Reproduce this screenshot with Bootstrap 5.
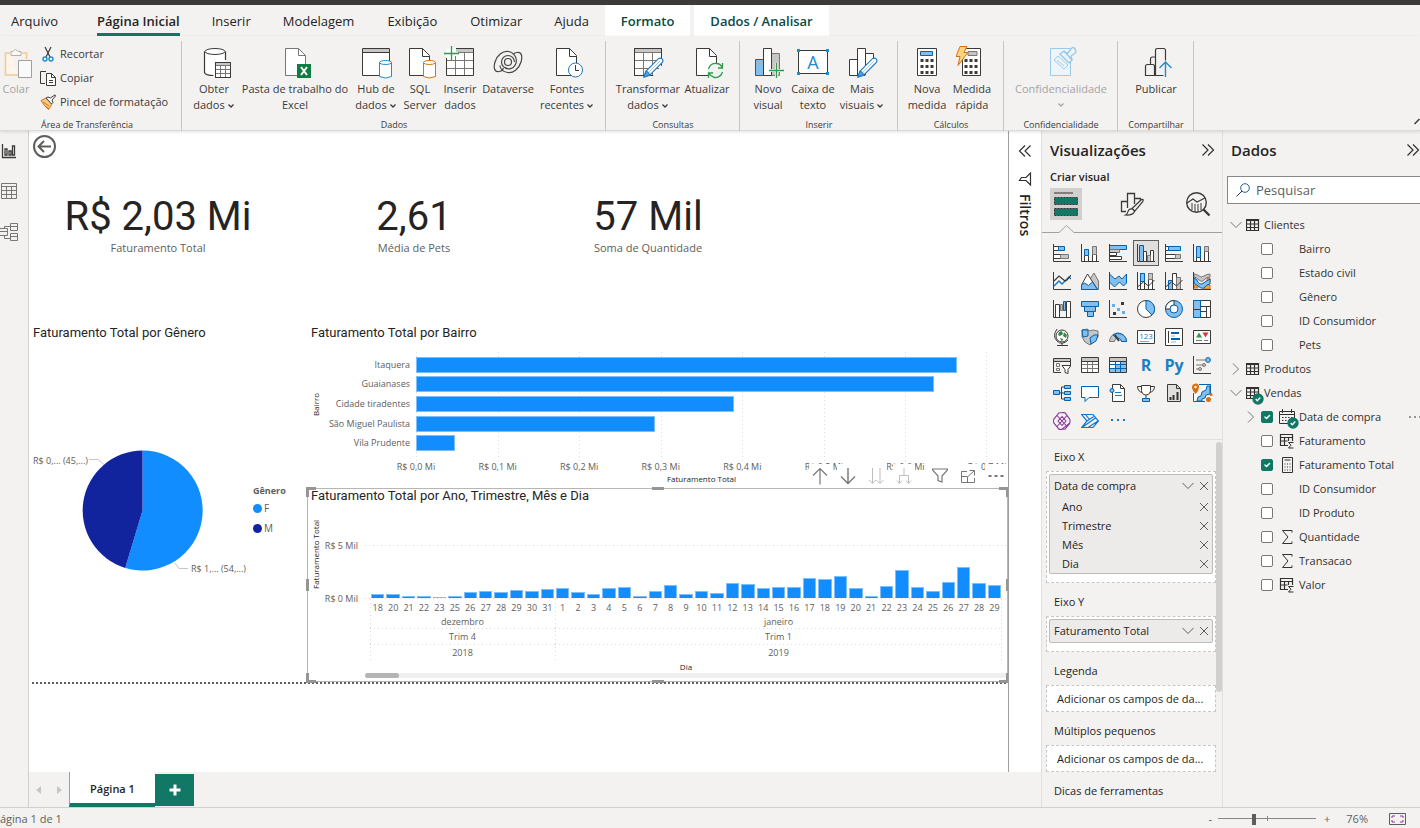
<!DOCTYPE html>
<html lang="pt-BR">
<head>
<meta charset="utf-8">
<meta name="viewport" content="width=device-width, initial-scale=1">
<title>Relatório de vendas</title>
<link href="https://cdn.jsdelivr.net/npm/bootstrap@5.3.0/dist/css/bootstrap.min.css" rel="stylesheet">
<style>
:root{--ui:"Open Sans","Noto Sans",sans-serif;--din:Roboto,"Open Sans",sans-serif;--green:#117865;--bg:#f3f2f1;--line:#e1dfdd;--ink:#252423;--azure:#118dff;--dot:#dddbd9}
body{font-family:var(--ui);font-size:11px;line-height:16px;color:#323130;background:var(--bg);height:100vh;overflow:hidden}
button,input{font-family:inherit}
.plain{background:none;border:0;padding:0;color:inherit;font-size:inherit;line-height:inherit}
svg{display:block;flex:none}
.topstrip{height:5px;background:#3b3a39}
/* tabs */
.menubar{height:31px;font-size:13px}
.menubar .nav-link{color:var(--ink);padding:0 16px;line-height:33px;height:31px;white-space:nowrap}
.menubar .tab-file{padding:0 23px 0 11px}
.menubar .nav-link.active{font-weight:600}
.menubar .nav-link.active span{display:block;height:31px;border-bottom:3px solid var(--green)}
.menubar .wide{padding:0 17px}
.menubar .ctx{background:#fff;color:#0b4a40;font-weight:600;padding:0 16px;margin-right:4px}
/* ribbon */
.ribbon{height:95px;padding-top:5px;color:#3b3a39;position:relative;border-bottom:1px solid #dddbd9;box-shadow:0 1px 3px rgba(0,0,0,.12);z-index:2}
.rgroup{height:90px;border-right:1px solid #c8c6c4;padding:5px 7px 0 8px}
.rgroup.first{padding-left:0;width:182px}
.cap{font-size:9px;line-height:12px;text-align:center}
.rbtn{white-space:nowrap;display:flex;flex-direction:column;align-items:center;justify-content:flex-start;flex:none}
.rbtn svg{margin-bottom:3px}
.rbtn span svg{margin:0 0 0 2px}
.w32{width:32px}.w40{width:40px}.w42{width:42px}.w48{width:48px}.w50{width:50px}.w56{width:56px}.w60{width:60px}.w62{width:62px}.w68{width:68px}.w98{width:98px}.w114{width:114px}
.off{color:#a6a4a2}
.clip-list{padding-left:8px;margin-top:-4px}
.srow{height:24px;gap:4px;display:flex;align-items:center;white-space:nowrap}
.collapse-rib{position:absolute;right:0;bottom:3px}
/* icon paint */
.k,.kw{fill:none;stroke:#3b3a39}.kw{fill:#fff}
.b{fill:#83beec;stroke:#0063b1}.bl{fill:none;stroke:#1e8bcd}.bw{fill:#fff;stroke:#0063b1}
.g{fill:#c8c6c4;stroke:#797775}.gl{fill:none;stroke:#797775}
.grn{fill:none;stroke:#2e9a4a}
/* main */
.mainrow{min-height:0}
.rail{width:29px;border-right:1px solid #d2d0ce}
.canvas-area{border-right:1px solid #a19f9d}
.report{color:#605e5c;font-size:9px;line-height:12px}
.backrow{height:32px;padding:4px}
.kpis{height:160px;padding-top:31px}
.kpi strong{display:block;font:400 40px/46px var(--din);color:var(--ink);white-space:nowrap}
.kpi span{font-size:11px;line-height:16px}
.k1{width:258px}.k2{width:254px}.k3{width:214px}
.vtitle{font:400 13px/20px var(--din);color:var(--ink);margin:0;white-space:nowrap;padding-left:4px}
.leftcol{width:278px;flex:none}
.pie{padding-top:102px}
.leg{font-size:10px;line-height:20px;padding-top:39px}
.leg b{display:block;font-size:9px;line-height:14px}
.leg li{display:flex;align-items:center;gap:2px}
.leg i{width:9px;height:9px;border-radius:50%}
.f{background:var(--azure)}.m{background:#12239e}
.vtext{writing-mode:vertical-rl;transform:rotate(180deg);font-size:8px;line-height:10px;text-align:center;color:var(--ink);white-space:nowrap}
.vtext.t1{height:122px}.vtext.t2{height:102px;margin-left:3px}
.hb{height:144px;padding-right:21px;margin-top:1px}
.hlabels{width:92px;text-align:right;height:108px;padding:3px 3px 7px 0;margin-top:8px}
.hlabels div{flex:1;display:flex;align-items:center;justify-content:flex-end;white-space:nowrap}
.hbody{padding-left:3px;min-width:0}
.hplot{height:109px;padding:3px 0 8px;margin-top:8px;position:relative}
.hgrid{position:absolute;inset:0;display:flex}
.hgrid i{flex:1;background:repeating-linear-gradient(var(--dot) 0 1px,transparent 1px 4px) 0 0/1px 100% no-repeat}
.hgrid i:last-child{background:repeating-linear-gradient(var(--dot) 0 1px,transparent 1px 4px) 0 0/1px 100% no-repeat,repeating-linear-gradient(var(--dot) 0 1px,transparent 1px 4px) 100% 0/1px 100% no-repeat}
.hrow{flex:1;display:flex;align-items:center;position:relative}
.hrow i{height:16px;background:var(--azure);border:1px solid #7cbfff}
/* eight labels centred on the eight grid lines */
.hticks{margin-left:calc(-100%/14);margin-right:calc(-100%/14);display:flex}
.hticks span{flex:1 1 0;display:flex;justify-content:center;white-space:nowrap}
.axt{font-size:8px;text-align:center;color:var(--ink)}
.selbox{border:1px solid #b8b6b4;background:#fff;height:194px;position:relative;display:flex;flex-direction:column}
.selbox .vtitle{line-height:14px;padding-left:3px}
.hd{position:absolute;border:0 solid #979593;width:10px;height:10px}
.hd.tl{top:-2px;left:-2px;border-width:3px 0 0 3px}.hd.tr{top:-2px;right:-2px;border-width:3px 3px 0 0}
.hd.bl2{bottom:-2px;left:-2px;border-width:0 0 3px 3px}.hd.br{bottom:-2px;right:-2px;border-width:0 3px 3px 0}
.hd.tc,.hd.bc{left:calc(50% - 6px);width:12px;height:3px;background:#979593}.hd.tc{top:-2px}.hd.bc{bottom:-2px}
.hd.ml,.hd.mr{top:calc(50% - 6px);width:3px;height:12px;background:#979593}.hd.ml{left:-2px}.hd.mr{right:-2px}
.vtools{position:absolute;right:0;top:-25px;display:flex;gap:6px}
.vtools button{width:22px;height:23px;background:#fff;display:flex;align-items:center;justify-content:center}
.vtools .gap{margin-left:8px}
.yt{width:33px;height:96px;padding-top:37px;white-space:nowrap;margin-left:4px}
.yt span{display:flex;justify-content:flex-end;height:53px}
.cbody{margin-left:7px}
.cplot{height:96px;position:relative;display:flex;align-items:flex-end;padding:0 5px 1px;background:repeating-linear-gradient(90deg,var(--dot) 0 1px,transparent 1px 4px) 0 42px/100% 1px no-repeat,repeating-linear-gradient(90deg,var(--dot) 0 1px,transparent 1px 4px) 0 100%/100% 1px no-repeat}
.cplot i{flex:1;margin:0 1px;background:var(--azure);border:1px solid #7cbfff;border-bottom:0}
.periods{margin:0 5px;height:62px;background:repeating-linear-gradient(var(--dot) 0 1px,transparent 1px 4px) 100% 0/1px 100% no-repeat}
.periods>div{text-align:center;background:repeating-linear-gradient(var(--dot) 0 1px,transparent 1px 4px) 0 0/1px 100% no-repeat}
.p12{flex:12 1 0}.p29{flex:29 1 0}
.days{display:flex;line-height:17px;height:17px}
.days span{flex:1 1 0;width:0;display:flex;justify-content:center}
.per{line-height:16px;height:16px;background:repeating-linear-gradient(90deg,var(--dot) 0 1px,transparent 1px 4px) 0 100%/100% 1px no-repeat}
.per.mo{line-height:11px;height:13px}
.per.yr{background:none}
.hscroll{height:5px;border-radius:3px;background:#f0f0f0}
.hscroll i{display:block;width:34px;height:5px;border-radius:3px;background:#b5b5b5}
.pgend{height:2px;margin:0 0 0 3px;background:repeating-linear-gradient(90deg,#605e5c 0 2px,transparent 2px 4px)}
.filt{width:32px;gap:14px;padding-top:13px;color:var(--ink)}
.filt span{writing-mode:vertical-rl;font-size:14px;font-weight:600;line-height:18px;margin-top:-6px}
.pages{height:35px}
.pgnav{width:40px;gap:16px;padding-left:6px}
.pages .pg{width:86px;background:#fff;border-left:1px solid #a19f9d;border-bottom:4px solid var(--green);padding-top:3px;font-size:11px;font-weight:600;color:var(--ink)}
.pages .add{width:39px;margin:2px 0 1px;background:var(--green)}
/* panes */
.pane{border-left:1px solid var(--line)}
.pane h2{font-size:15px;line-height:20px;font-weight:600;color:var(--ink);margin:0}
.phead{padding:9px 7px 0 8px}
.data .phead{padding-right:0}
.vis{width:181px}
.vis h3{font-size:11px;font-weight:600;line-height:16px;margin:9px 0 0;color:var(--ink)}
.modes{padding:3px 8px 0}
.mode{width:32px;height:32px;display:flex;align-items:center;justify-content:center}
.mode.on{background:#d2d0ce}
.gallery{display:grid;grid-template-columns:repeat(6,28px);grid-auto-rows:28px;padding:6px 0 4px 6px}
.gallery button{display:flex;align-items:center;justify-content:center}
.gallery .on{margin:2px;background:#e1dfdd;outline:1px solid #605e5c}
.gallery svg{width:18px;height:18px}
.gallery .ltr{font-weight:700;color:#1a7fc3;font-size:16px}
.fields{position:relative;border-top:1px solid var(--line);padding:9px 6px 0 4px;overflow:hidden;color:var(--ink)}
.fields h4{font-size:11px;line-height:16px;font-weight:400;margin:0 0 6px 8px}
.fields:after{content:"";position:absolute;right:0;top:2px;width:6px;height:250px;border-radius:3px;background:#d2d0ce}
.well{border:1px dashed #c8c6c4;background:#fff;padding:2px;margin-bottom:11px}
.chip{background:#edebe9;border:1px solid #bebbb8;border-radius:2px;padding-left:4px}
.chip>div{display:flex;align-items:center;height:19px;gap:5px;padding-right:3px}
.chip>div:first-child{height:22px}
.chip>div+div{padding-left:8px}
.chip svg{color:#605e5c}
.well.tall{padding-bottom:8px}
.empty{height:27px;line-height:26px;padding:0 0 0 10px;white-space:nowrap}
.data{width:198px}
.search{height:28px;border:1px solid #8a8886;border-right:0;background:#fff;margin:16px 0 0 4px;padding-left:8px;gap:6px}
.search input{border:0;outline:0;width:100%;font-size:13px;padding:0;color:#605e5c}
.search input::placeholder{color:#605e5c;opacity:1}
.tree{padding-top:9px}
.tree li{display:flex;align-items:center;height:24px;white-space:nowrap;position:relative}
.tree .tb{padding-left:7px;gap:4px}
.tree label{flex:1;cursor:pointer}
.dim{color:#797775}
.fld .exp{width:12px;margin-left:22px;margin-right:4px}
.fld .form-check-input{width:12px;height:12px;margin:0 6px 0 0;border:1px solid #797775;border-radius:2px;flex:none}
.fld .form-check-input:checked{background-color:var(--green);border-color:var(--green)}
.fld .ic{width:16px;margin-right:4px;flex:none}
.okb{position:absolute;bottom:0}
.tb .okb{left:29px}.fld .okb{left:64px}
.status{height:21px;border-top:1px solid #d2d0ce;padding-top:2px;font-size:11px;color:#605e5c}
.zoombar{padding-right:14px}
.zoombar .pct{margin:0 21px 0 16px}
.zoomr{appearance:none;-webkit-appearance:none;width:98px;height:12px;background:linear-gradient(#8a8886,#8a8886) 0 5px/100% 1px no-repeat,linear-gradient(#8a8886,#8a8886) 50% 3px/1px 5px no-repeat;margin:0 8px 0 6px}
.zoomr::-webkit-slider-thumb{-webkit-appearance:none;width:4px;height:11px;background:#605e5c}
</style>
</head>
<body class="d-flex flex-column">
<svg width="0" height="0" class="position-absolute" aria-hidden="true">
<symbol id="chev" viewBox="0 0 8 8"><path d="M1.500 2.500 4 5l2.500-2.500" fill="none" stroke="currentColor" stroke-width="1.300"/></symbol>
<symbol id="x" viewBox="0 0 10 10"><path d="m1 1 8 8M9 1 1 9" fill="none" stroke="currentColor"/></symbol>
<symbol id="down" viewBox="0 0 12 12"><path d="m.5 3 5.500 5.500L11.500 3" fill="none" stroke="currentColor"/></symbol>
<symbol id="right" viewBox="0 0 12 12"><path d="M3 .5 8.500 6 3 11.500" fill="none" stroke="currentColor"/></symbol>
<symbol id="dbl" viewBox="0 0 14 14"><path d="m1.500 1.500 5.500 5.500-5.500 5.500M7 1.500 12.500 7 7 12.500" fill="none" stroke="#323130" stroke-width="1.200"/></symbol>
<symbol id="tbl" viewBox="0 0 14 14"><path d="M.5 1.500h12v11H.5zM.5 2.500h12M.5 6h12M.5 9.500h12M4.500 2v11M8.500 2v11" fill="none" stroke="#323130" stroke-width="1.200"/></symbol>
<symbol id="tsum" viewBox="0 0 16 16"><path d="M9 12.500H1.500v-11h12V8M1.500 4.500h12M1.500 8h7M5.500 4.500v8M9.500 4.500V8" fill="none" stroke="#323130" stroke-width="1.200"/><path d="M14.500 9.500h-5l2.500 2.700-2.500 2.800h5" fill="none" stroke="#323130"/></symbol>
<symbol id="sum" viewBox="0 0 16 16"><path d="M13 3.500v-2H3.500L9 8l-5.500 6.500H13v-2" fill="none" stroke="#323130"/></symbol>
<symbol id="calc" viewBox="0 0 16 16"><path d="M3.500.5h10v15h-10zM5.500 3h6" fill="none" stroke="#323130"/><path d="M6 6.500v8M8.500 6.500v8M11 6.500v8" fill="none" stroke="#323130" stroke-dasharray="1 2"/></symbol>
<symbol id="ok" viewBox="0 0 12 12"><circle cx="6" cy="6" r="5.700" fill="#117865"/><path d="m3.700 6 1.600 1.700 3-3.200" fill="none" stroke="#fff" stroke-width="1.300"/></symbol>
<symbol id="pen" viewBox="0 0 22 22"><path d="m1 21 2-6L16.500 1.500q2-1 3.500.5t.5 3.500L7 19z" fill="#fff" stroke="#1e78bd" stroke-width="1.200"/><path d="m1 21 2-6q3.500 0 4 4z" fill="#4ea0dc" stroke="#1e78bd"/><path d="M6.500 15.500 18 4" stroke="#9cc9ec"/></symbol>
</svg>

<div class="topstrip"></div>
<nav class="menubar nav flex-nowrap">
<a class="nav-link tab-file" href="#">Arquivo</a><a class="nav-link active" href="#"><span>Página Inicial</span></a><a class="nav-link" href="#">Inserir</a><a class="nav-link" href="#">Modelagem</a><a class="nav-link wide" href="#">Exibição</a><a class="nav-link" href="#">Otimizar</a><a class="nav-link" href="#">Ajuda</a><a class="nav-link ctx" href="#">Formato</a><a class="nav-link ctx" href="#">Dados / Analisar</a>
</nav>

<div class="ribbon d-flex">
<section class="rgroup first d-flex flex-column">
<div class="d-flex flex-fill">
<button class="plain rbtn w32 off" type="button"><svg width="32" height="32"><path d="M10 7H5.500v22H18M21.500 7h5v6" fill="#fff5ea" stroke="#f3c795" stroke-width="1.500"/><path d="M11 9.500V5.500h2q2.500-4 5 0h3v4z" fill="#fafafa" stroke="#b3b0ad"/><path d="M18.500 14.500h13v17h-13z" fill="#fafafa" stroke="#a19f9d"/></svg>Colar</button>
<div class="clip-list">
<button class="plain srow" type="button"><svg width="16" height="16"><path d="m5 1 5 10M11 1 6 11" class="k" stroke-width="1.200"/><circle cx="5" cy="13" r="2" class="bl" stroke-width="1.400"/><circle cx="11" cy="13" r="2" class="bl" stroke-width="1.400"/></svg>Recortar</button>
<button class="plain srow" type="button"><svg width="16" height="16"><path d="M5 13.500H.5V1.500H6" class="k"/><path d="M6.500 3.500h5l4 4v8h-9z" class="kw"/><path d="M11.500 3.500v4h4M9 10.500h4M9 12.500h4" class="k"/></svg>Copiar</button>
<button class="plain srow" type="button"><svg width="16" height="16"><path d="M1 6.500 6 4l6 6-3.500 5.500Q4 12 1 6.500z" fill="#f9c987" stroke="#d8700f"/><path d="m3 8 6 4M5 12l4 3" stroke="#d8700f"/><path d="m6 4 2-1 2.500 1L15 .8l.5 1.200L12 6l1 2.500-1.500 1.500z" class="kw"/></svg>Pincel de formatação</button>
</div></div>
<div class="cap">Área de Transferência</div></section>

<section class="rgroup d-flex flex-column"><div class="d-flex flex-fill">
<button class="plain rbtn w48" type="button"><svg width="32" height="32" overflow="visible"><path d="M6.500 5.500v22q2 3 10 3V16h11V5.500" fill="#fff"/><ellipse cx="17" cy="5.500" rx="10" ry="3" class="kw"/><path d="M6.500 5.500v21q1 3 9 3M27.500 5.500V14" class="k" stroke-width="1.200"/><path d="M17.500 16.500h15v15h-15z" class="kw"/><path d="M18 17h14v2.500H18z" fill="#c8c6c4"/><path d="M17.500 19.500h15M17.500 23.500h15M17.500 27.500h15M22.500 20v11M27.500 20v11" class="gl"/><path d="M17.500 16.500h15v15h-15z" class="k"/></svg><span>Obter<br>dados<svg class="d-inline" width="8" height="8"><use href="#chev"/></svg></span></button>
<button class="plain rbtn w114" type="button"><svg width="32" height="32" overflow="visible"><path d="M6.500 2.500h13l7 7v20h-20z" fill="#fff" stroke="#797775"/><path d="M19.500 2.500v7h7" class="gl"/><path d="M18 18h14v14H18z" fill="#107c41"/><path d="m22 21 6 8M28 21l-6 8" stroke="#fff" stroke-width="2"/></svg><span>Pasta de trabalho do<br>Excel</span></button>
<button class="plain rbtn w48" type="button"><svg width="32" height="32" overflow="visible"><path d="M2.500 2.500h27v27h-27z" class="kw"/><path d="M3 3h26v3H3z" fill="#c8c6c4"/><path d="M2.500 6.500h27" class="k"/><path d="M19.500 16.500v14q6 3 12 0v-14" fill="#fff" stroke="#1e8bcd"/><ellipse cx="25.500" cy="16.500" rx="6" ry="2" fill="#fff" stroke="#1e8bcd"/></svg><span>Hub de<br>dados<svg class="d-inline" width="8" height="8"><use href="#chev"/></svg></span></button>
<button class="plain rbtn w40" type="button"><svg width="32" height="32" overflow="visible"><path d="M5.500 2.500h13l7 7v20h-20z" class="kw"/><path d="M18.500 2.500v8h7" class="k"/><path d="M19.500 16.500v14q6 3 12 0v-14" fill="#fff" stroke="#d8700f"/><ellipse cx="25.500" cy="16.500" rx="6" ry="2" fill="#fff" stroke="#d8700f"/></svg><span>SQL<br>Server</span></button>
<button class="plain rbtn w40" type="button"><svg width="32" height="32" overflow="visible"><path d="M2.500 2.500h27v27h-27z" fill="#fff"/><path d="M12 3h17v3H12z" fill="#c8c6c4"/><path d="M2.500 14.500h27M2.500 22.500h27M11.500 10v19M20.500 6v23M14 6.500h15" class="gl"/><path d="M12 2.500h17.500v27h-27V12" class="k"/><path d="M0 7.500h15M7.500 0v15" class="grn" stroke-width="1.300"/></svg><span>Inserir<br>dados</span></button>
<button class="plain rbtn w56" type="button"><svg width="32" height="32"><g fill="none" stroke="#484644" stroke-width="1.200"><circle cx="16" cy="16" r="3.500"/><path d="M22.500 16a6.500 6.500 0 1 0-6.500 6.500"/><path d="M7 25.500C2 26.500 1.500 21 3 16 5 9 11 4.500 16.500 5.500c6 1 9.500 7.500 7 13-2 4.500-7.500 5.500-10.500 3"/><path d="M25 6.500c5-1 5.500 4.500 4 9.500-2 7-8 11.500-13.500 10.500-4-.6-7-3.500-7.700-7"/><path d="M7 25.500q3 0 4.500-3.500M25 6.500q-2.500 0-4 2"/></g></svg><span>Dataverse</span></button>
<button class="plain rbtn w62" type="button"><svg width="32" height="32" overflow="visible"><path d="M5.500 2.500h13l7 7v20h-20z" class="kw"/><path d="M18.500 2.500v8h7" class="k"/><circle cx="24.500" cy="24" r="7" fill="#fff" stroke="#1e78bd"/><path d="M24.500 19v5.500H28" class="k"/></svg><span>Fontes<br>recentes<svg class="d-inline" width="8" height="8"><use href="#chev"/></svg></span></button>
</div><div class="cap">Dados</div></section>

<section class="rgroup d-flex flex-column"><div class="d-flex flex-fill">
<button class="plain rbtn w68" type="button"><svg width="32" height="32" overflow="visible"><path d="M2.500 2.500h27v27h-27z" class="kw"/><path d="M3 3h26v3H3z" fill="#c8c6c4"/><path d="M2.500 6.500h27M2.500 14.500h27M2.500 22.500h27M11.500 6v23M20.500 6v23" class="gl"/><path d="M2.500 2.500h27v27h-27z" class="k"/><path d="M20 31h11V18z" fill="#f3f2f1"/><use href="#pen" x="11" y="11" width="21" height="21"/></svg><span>Transformar<br>dados<svg class="d-inline" width="8" height="8"><use href="#chev"/></svg></span></button>
<button class="plain rbtn w50" type="button"><svg width="32" height="32" overflow="visible"><path d="M5.500 2.500h13l7 7v20h-20z" class="kw"/><path d="M18.500 2.500v8h7" class="k"/><circle cx="24.500" cy="25" r="8" fill="#f3f2f1"/><path d="M17.500 23q2-6 8-5.500 4 0 6 4.500M31.500 17v5H27M31.500 26q-2 6-8 5.500-4-1-6-4.500M17.500 32v-5H22" class="grn" stroke-width="1.300"/></svg><span>Atualizar</span></button>
</div><div class="cap">Consultas</div></section>

<section class="rgroup d-flex flex-column"><div class="d-flex flex-fill pe-1">
<button class="plain rbtn w40" type="button"><svg width="32" height="32" overflow="visible"><path d="M3.500 13.500h8v16h-8z" class="b"/><path d="M19.500 7.500h8v22h-8z" class="g"/><path d="M11.500 2.500h8v27h-8z" class="kw"/><path d="M18 24.500h14M24.500 17v15" stroke="#f3f2f1" stroke-width="3"/><path d="M17 24.500h15M24.500 17v15" class="grn" stroke-width="1.300"/></svg><span>Novo<br>visual</span></button>
<button class="plain rbtn w50" type="button"><svg width="32" height="32"><path d="M1.500 4.500h29v23h-29z" class="kw"/><path d="M0 3h3v3H0zM29 3h3v3h-3zM0 26h3v3H0zM29 26h3v3h-3z" fill="#1e8bcd"/><text x="16" y="23" text-anchor="middle" font-size="18" fill="#1e8bcd">A</text></svg><span>Caixa de<br>texto</span></button>
<button class="plain rbtn w48" type="button"><svg width="32" height="32" overflow="visible"><path d="M3.500 13.500h8v16h-8zM19.500 7.500h8v22h-8zM11.500 2.500h8v27h-8z" class="kw"/><path d="M18 31h12V17z" fill="#f3f2f1"/><use href="#pen" x="11" y="11" width="21" height="21"/></svg><span>Mais<br>visuais<svg class="d-inline" width="8" height="8"><use href="#chev"/></svg></span></button>
</div><div class="cap">Inserir</div></section>

<section class="rgroup d-flex flex-column"><div class="d-flex flex-fill">
<button class="plain rbtn w42" type="button"><svg width="32" height="32"><path d="M6.500 2.500h19v27h-19z" class="kw"/><path d="M9.500 5.500h12v4h-12z" class="b"/><path d="M11 13v15M16 13v15M21 13v15" stroke="#3b3a39" stroke-width="3" stroke-dasharray="3 3"/></svg><span>Nova<br>medida</span></button>
<button class="plain rbtn w48" type="button"><svg width="32" height="32"><path d="M6.500 2.500h18v27h-18z" class="kw"/><path d="M12 5.500h9v4h-9z" class="g"/><path d="M10 13v15M15 13v15M20 13v15" stroke="#3b3a39" stroke-width="3" stroke-dasharray="3 3"/><path d="M4 .5h7l-3 6h4L2 19.500l2-9H0z" fill="#fcd37e" stroke="#d8700f"/></svg><span>Medida<br>rápida</span></button>
</div><div class="cap">Cálculos</div></section>

<section class="rgroup d-flex flex-column"><div class="d-flex flex-fill">
<button class="plain rbtn w98 off" type="button"><svg width="32" height="32" overflow="visible"><g fill="#eef5fa" stroke="#9ccbe8"><path d="M5.500 2.500h20v27h-20z"/><path d="m9 14 4-4 10 9-4 4zM12 14l7 6"/><path d="m15 8 4-3 8 9-3 3zM19 6l4 1 3-4q2-3 4 0t-1 5l-3 2 1 4" stroke-width="1.500"/></g></svg><span>Confidencialidade<br><svg class="mx-auto mt-1" width="8" height="8"><use href="#chev"/></svg></span></button>
</div><div class="cap">Confidencialidade</div></section>
<section class="rgroup d-flex flex-column"><div class="d-flex flex-fill">
<button class="plain rbtn w60" type="button"><svg width="32" height="32"><path d="M15.500 29.500v-25q0-2 2-2h6q2 0 2 2v10M10.500 18v-5q0-2 2-2h3M5.500 29.500v-9q0-2 2-2h5q2 0 2 2v9zM14.500 29.500h9" class="k" stroke-width="1.200"/><path d="M25.500 31V16M19.500 22l6-6 6 6" class="bl" stroke-width="1.400"/></svg><span>Publicar</span></button>
</div><div class="cap text-nowrap">Compartilhar</div></section>
<button class="plain collapse-rib" type="button" aria-label="Recolher"><svg width="6" height="10"><path d="m.5 7 5-5" stroke="#3b3a39" stroke-width="1.400"/></svg></button>
</div>

<main class="mainrow d-flex flex-fill">
<div class="d-flex flex-fill">
<nav class="rail d-flex flex-column gap-4 pt-2">
<button class="plain mt-1" type="button" aria-label="Relatório"><svg width="18" height="16"><path d="M2.500 1v13.500H16M5 6h2v6H5zM9 8h2v4H9zM12.500 3h2v9h-2z" class="k" stroke-width="1.300"/></svg></button>
<button class="plain" type="button" aria-label="Dados"><svg width="18" height="16"><path d="M1.500.5h15v15h-15zM1.500 3.500h15M1.500 7.500h15M1.500 11.500h15M6.500 3v12M11.500 3v12" class="gl"/></svg></button>
<button class="plain" type="button" aria-label="Modelo"><svg width="19" height="18"><path d="M10.500.5h7v7h-7zM10.500 3.500h7M10.500 10.500h7v7h-7zM10.500 13.500h7M0 5.500h7.500v7H0M0 8.500h7M4.500 5.500v-2h6M4.500 12.500v3h6" class="gl"/></svg></button>
</nav>
<div class="d-flex flex-column flex-fill">
<div class="mainrow d-flex flex-fill bg-white">
<div class="canvas-area flex-fill overflow-hidden">
<div class="report">
<div class="backrow"><button class="plain" type="button" aria-label="Voltar"><svg width="24" height="24"><circle cx="11.500" cy="11.500" r="10.500" fill="none" stroke="#605e5c" stroke-width="2"/><path d="M18 11.500H6M11 6l-5.500 5.500L11 17" fill="none" stroke="#605e5c" stroke-width="2"/></svg></button></div>
<div class="kpis d-flex text-center">
<div class="kpi k1"><strong>R$ 2,03 Mi</strong><span>Faturamento Total</span></div>
<div class="kpi k2"><strong>2,61</strong><span>Média de Pets</span></div>
<div class="kpi k3"><strong>57 Mil</strong><span>Soma de Quantidade</span></div>
</div>
<div class="d-flex">
<div class="leftcol"><h5 class="vtitle">Faturamento Total por Gênero</h5>
<div class="pie d-flex">
<svg width="224" height="134"><path d="M113.500 65.500V5.500a60 60 0 1 1-17.300 117.400z" fill="#118dff"/><path d="M113.500 65.500 96.200 122.900A60 60 0 0 1 113.500 5.500z" fill="#12239e"/><path d="M60 14.500h9l6 5M146 118l4 5.500h9" fill="none" stroke="#c8c6c4"/><text x="4" y="19" font-size="9" fill="#605e5c">R$ 0,... (45,...)</text><text x="162" y="127" font-size="9" fill="#605e5c">R$ 1,... (54,...)</text></svg>
<div class="leg"><b>Gênero</b><ul class="list-unstyled m-0"><li><i class="f"></i>F</li><li><i class="m"></i>M</li></ul></div></div></div>

<div class="flex-fill">
<h5 class="vtitle">Faturamento Total por Bairro</h5>
<div class="hb d-flex">
<div class="vtext t1 ms-1">Bairro</div>
<div class="hlabels d-flex flex-column"><div>Itaquera</div><div>Guaianases</div><div>Cidade tiradentes</div><div>São Miguel Paulista</div><div>Vila Prudente</div></div>
<div class="hbody flex-fill"><div class="hplot d-flex flex-column"><div class="hgrid"><i></i><i></i><i></i><i></i><i></i><i></i><i></i></div>
<div class="hrow"><i style="width:94.8%"></i></div><div class="hrow"><i style="width:90.8%"></i></div><div class="hrow"><i style="width:55.7%"></i></div><div class="hrow"><i style="width:41.9%"></i></div><div class="hrow"><i style="width:6.8%"></i></div></div>
<div class="hticks"><span>R$ 0,0 Mi</span><span>R$ 0,1 Mi</span><span>R$ 0,2 Mi</span><span>R$ 0,3 Mi</span><span>R$ 0,4 Mi</span><span>R$ 0,5 Mi</span><span>R$ 0,6 Mi</span><span>R$ 0,7 Mi</span></div>
<div class="axt">Faturamento Total</div></div>
</div>
<div class="selbox">
<h5 class="vtitle">Faturamento Total por Ano, Trimestre, Mês e Dia</h5>
<div class="vtools">
<button class="plain" type="button" aria-label="Subir nível"><svg width="16" height="18"><path d="M8 17.500V2M1 8.500 8 1.500l7 7" class="gl" stroke-width="1.200"/></svg></button>
<button class="plain" type="button" aria-label="Detalhar"><svg width="16" height="18"><path d="M8 1v15.500M1 9.500l7 7 7-7" class="gl" stroke-width="1.400"/></svg></button>
<button class="plain" type="button" aria-label="Próximo nível"><svg width="16" height="18"><path d="M4.500 1v15M1 13l3.500 3.500L8 13M12 1v15M8.500 13l3.500 3.500 3.500-3.500" fill="none" stroke="#c0bebc"/></svg></button>
<button class="plain" type="button" aria-label="Expandir"><svg width="16" height="18"><path d="M8 1v7.500M3.500 16V8.500h9V16M1 13.500l2.500 3 2.500-3M10 13.500l2.500 3 2.500-3" fill="none" stroke="#c0bebc"/></svg></button>
<button class="plain gap" type="button" aria-label="Filtros"><svg width="16" height="18"><path d="M.5 2h15v1l-5.500 6v6l-4-1.500V9L.5 3z" class="gl" stroke-width="1.200"/></svg></button>
<button class="plain" type="button" aria-label="Foco"><svg width="16" height="18"><path d="M7 4.500H1.500v11h13V11M1.500 9.500h6v6M8 9.500l6.500-6M9.500 3.500h5v5" class="gl"/></svg></button>
<button class="plain" type="button" aria-label="Mais opções"><svg width="16" height="18"><path d="M.5 9h3M6.500 9h3M12.500 9h3" stroke="#797775" stroke-width="2"/></svg></button></div>
<div class="d-flex flex-fill">
<div class="vtext t2">Faturamento Total</div>
<div class="yt"><span>R$ 5 Mil</span><span>R$ 0 Mil</span></div>
<div class="cbody flex-fill">
<div class="cplot" id="cols"></div>
<div class="periods d-flex"><div class="p12"><div class="days" id="d1"></div><div class="per mo">dezembro</div><div class="per">Trim 4</div><div class="per yr">2018</div></div><div class="p29"><div class="days" id="d2"></div><div class="per mo">janeiro</div><div class="per">Trim 1</div><div class="per yr">2019</div></div></div>
<div class="axt">Dia</div><div class="hscroll"><i></i></div>
</div></div>
<i class="hd tl"></i><i class="hd tc"></i><i class="hd tr"></i><i class="hd ml"></i><i class="hd mr"></i><i class="hd bl2"></i><i class="hd bc"></i><i class="hd br"></i>
</div></div></div>
<div class="pgend"></div>
</div></div>
<aside class="filt d-flex flex-column align-items-center flex-shrink-0">
<svg width="14" height="14"><g transform="matrix(-1 0 0 1 14 0)"><use href="#dbl" width="14" height="14"/></g></svg>
<svg width="14" height="14"><path d="M12.500 1v12L8 8.500H1.500l2-3H8z" fill="none" stroke="#323130" stroke-width="1.200"/></svg>
<span>Filtros</span></aside>
</div>
<div class="pages d-flex">
<div class="pgnav d-flex align-items-center"><svg width="6" height="8"><path d="M6 0v8L1 4z" fill="#c8c6c4"/></svg><svg width="6" height="8"><path d="M0 0v8l5-4z" fill="#c8c6c4"/></svg></div>
<button class="plain pg" type="button">Página 1</button><button class="plain add d-flex align-items-center justify-content-center" type="button" aria-label="Nova página"><svg width="12" height="12"><path d="M6 .5v11M.5 6h11" stroke="#fff" stroke-width="3"/></svg></button></div>
</div></div>

<aside class="pane vis flex-shrink-0 d-flex flex-column">
<div class="phead"><div class="d-flex align-items-center justify-content-between"><h2>Visualizações</h2><button class="plain" type="button" aria-label="Recolher"><svg width="14" height="14"><use href="#dbl"/></svg></button></div>
<h3>Criar visual</h3></div>
<div class="modes d-flex justify-content-between">
<button class="plain mode on" type="button" aria-label="Criar"><svg width="24" height="24"><path d="M0 1h19" stroke="#323130"/><path d="M.5 5.500h23v7H.5zM.5 16.500h23v7H.5z" fill="#117865" stroke="#323130" stroke-dasharray="2 1"/></svg></button>
<button class="plain mode" type="button" aria-label="Formatar"><svg width="24" height="24"><path d="M6 19.500H1.500v-10h6M7.500 16V1.500h7V12M14.500 6.500h6v2" class="k" stroke-width="1.300"/><path d="M23 7.500q.5 1-.5 2.500L15 19l-3-2.500L21 8q1-1 2-.5zM11.500 17q2.500.5 3 2.500-1.500 4-9 3.500 2-1 2.500-3.500 1-3 3.500-2.500z" fill="#f3f2f1" stroke="#3b3a39" stroke-width="1.200"/></svg></button>
<button class="plain mode" type="button" aria-label="Análise"><svg width="26" height="26"><circle cx="11.500" cy="11.500" r="9.800" class="k" stroke-width="1.400"/><path d="m2 12 6-4 4 3 8-4" class="k" stroke-width="1.200"/><path d="M7 12v7M10 13v8M13 13v8M16 12v7" class="k"/><path d="m18.500 18.500 6 6" stroke="#3b3a39" stroke-width="2.400"/></svg></button></div>
<svg width="100%" height="13"><path d="M0 12.500h17l7.500-7 7.500 7H181" fill="none" stroke="#a19f9d"/></svg>
<div class="gallery">
<button class="plain"><svg><path d="M.5 2.500h5v4h-5zM.5 10.500h7v4h-7z" class="kw"/><path d="M5.500 2.500h6v4h-6z" class="b"/><path d="M7.500 10.500h8v4h-8z" class="g"/><path d="M.5 0v17.500H18" class="k"/></svg></button>
<button class="plain"><svg><path d="M3.500 11.500h4v6h-4zM11.500 10.500h4v7h-4z" class="kw"/><path d="M3.500 5.500h4v6h-4z" class="b"/><path d="M11.500 2.500h4v8h-4z" class="g"/><path d="M.5 0v17.500H18" class="k"/></svg></button>
<button class="plain"><svg><path d="M.5 1.500h17v4H.5z" class="b"/><path d="M.5 5.500h10v3H.5z" class="g"/><path d="M.5 8.500h7v3h-7zM.5 12.500h12v3H.5z" class="kw"/><path d="M.5 0v17.500H18" class="k"/></svg></button>
<button class="plain on"><svg><path d="M2.500 1.500h4v16h-4z" class="b"/><path d="M6.500 7.500h3v10h-3zM13.500 6.500h3v11h-3z" class="kw"/><path d="M10.500 11.500h3v6h-3z" class="g"/><path d="M.5 0v17.500H18" class="k"/></svg></button>
<button class="plain"><svg><path d="M.5 2.500h3v4h-3zM.5 10.500h10v4H.5z" class="kw"/><path d="M3.500 2.500h12v4h-12z" class="b"/><path d="M10.500 10.500h5v4h-5z" class="g"/><path d="M.5 0v17.500H18" class="k"/></svg></button>
<button class="plain"><svg><path d="M3.500 12.500h4v5h-4zM11.500 7.500h4v10h-4z" class="kw"/><path d="M3.500 2.500h4v11h-4z" class="b"/><path d="M11.500 2.500h4v5h-4z" class="g"/><path d="M.5 0v17.500H18" class="k"/></svg></button>
<button class="plain"><svg><path d="m1 14 5-5 3 3 7-7 2 2" fill="none" stroke="#1e78bd" stroke-width="1.500"/><path d="m1 9 5-5 6 5 2-1 4-5" class="k" stroke-width="1.200"/><path d="M.5 0v17.500H18" class="k"/></svg></button>
<button class="plain"><svg><path d="m9 7 4-6 4.500 8v8.500H8z" class="g"/><path d="m.5 13 6-11 10 15.500H.5z" class="kw"/><path d="M.5 17.500V13l3-2 4 2.500 4-3.500 5 7.500z" class="b"/></svg></button>
<button class="plain"><svg><path d="m.5 2 5.500 5 4-3 3 3 4.500-5v9l-3 3-4-4-5 5-5-5z" class="b"/><path d="M.5 0v17.500H18" class="k"/></svg></button>
<button class="plain"><svg><path d="M3.500 1.500h4v16h-4zM11.500 1.500h4v16h-4z" class="kw"/><path d="M3.500 1.500h4v8h-4z" class="b"/><path d="M11.500 1.500h4v6h-4z" class="g"/><path d="m.5 15 6-5 5 4 6-6M.5 0v17.500H18" class="k"/></svg></button>
<button class="plain"><svg><path d="M3.500 8.500h4v9h-4z" class="b"/><path d="M7.500 1.500h4v16h-4z" class="kw"/><path d="M11.500 5.500h4v12h-4z" class="g"/><path d="m.5 15 6-5 5 4 6-6M.5 0v17.500H18" class="k"/></svg></button>
<button class="plain"><svg><path d="M1 8h3v3H1zM1 13h4v3H1zM11 13h6v4h-6zM14 6h3v4h-3z" fill="#f0a33c" stroke="#d8700f"/><path d="M1 2q3 0 5 2t5 0 6-2v3q-4 0-6 3t-5 0-5-3z" class="g"/><path d="M1 6q2 0 4 4t7 0l5-3v5q-3 0-5 3t-7-1l-4-3z" class="b"/><path d="M.5 0v17.500H18" class="k"/></svg></button>
<button class="plain"><svg><path d="M2.500 4.500h4v13h-4zM13.500 1.500h4v16h-4z" class="kw"/><path d="M7.500 4.500h2v6h-2z" class="g"/><path d="M10.500 1.500h2v9h-2z" class="b"/><path d="M.5 0v17.500H18" class="k"/></svg></button>
<button class="plain"><svg><path d="M.5 1.500h17v5H.5zM3.500 6.500h11v5h-11zM6.500 11.500h6v5h-6z" class="b"/></svg></button>
<button class="plain"><svg><path d="M12 2h3v3h-3zM4 12h3v3H4z" fill="#3b3a39"/><path d="M3 4h3v3H3zM8 8h3v3H8zM13 11h3v3h-3z" fill="#69afe5"/><path d="M.5 0v17.500H18" class="k"/></svg></button>
<button class="plain"><svg><circle cx="9" cy="9" r="8.500" class="kw"/><path d="M9 .5A8.500 8.500 0 0 1 15 15L9 9z" class="b"/></svg></button>
<button class="plain"><svg><circle cx="9" cy="9" r="8.500" class="b"/><path d="M.5 9A8.500 8.500 0 0 1 9 .5V5a4 4 0 0 0-4 4z" class="kw"/><circle cx="9" cy="9" r="4" class="bw"/></svg></button>
<button class="plain"><svg><path d="M.5.5h17v17H.5z" class="kw"/><path d="M.5.5h7v17h-7z" class="b"/><path d="M.5 9.500h7M7.500 6.500h10M13.500 6.500v11M7.500 11.500h6" class="k"/></svg></button>
<button class="plain"><svg><circle cx="9" cy="8" r="6" class="kw"/><path d="m6 4 3-1 1 3-3 2-2-1zM11 4l3 3-1 3-3-2zM7 10l3 1-1 3z" fill="#2e8b45"/><path d="M4 1Q-1 8 4 13t11-1M9 15v2.500M4 17.500h11" class="k"/></svg></button>
<button class="plain"><svg><path d="m1 2 5-1 3 2 3-1 5 1v6l-4 5-4 3-5-3-3-5z" class="g"/><path d="M1 2h6v6l-5 1zM9 10l4-3h4l-2 6-5 3z" class="b"/></svg></button>
<button class="plain"><svg><path d="M.5 13.500a8.500 8.500 0 0 1 17 0h-5a3.500 3.500 0 0 0-7 0z" class="g"/><path d="M4 7a8.500 8.500 0 0 1 13.500 6.500h-5A3.500 3.500 0 0 0 8 10.500z" class="b"/><path d="m6 7 4 6" stroke="#3b3a39" stroke-width="2"/></svg></button>
<button class="plain"><svg><path d="M.5 2.500h17v13H.5z" class="kw"/><text x="9" y="11" font-size="8" text-anchor="middle" fill="#1e78bd">123</text><path d="M3 13.500h9" stroke="#69afe5"/></svg></button>
<button class="plain"><svg><path d="M.5.5h17v17H.5z" class="kw"/><path d="M3.500 3v12" class="k"/><path d="M6 5h8M6 11h9" stroke="#0063b1" stroke-width="2"/><path d="M6 8h4M6 14h5" stroke="#83beec"/></svg></button>
<button class="plain"><svg><path d="M.5 2.500h17v13H.5z" class="kw"/><path d="m3 9.500 3-5 3 5z" fill="#2e9a4a"/><path d="m9.500 4.500 3 5 3-5z" fill="#d63a3a"/><path d="M3 12.500h6M11 12.500h4" class="gl"/></svg></button>
<button class="plain"><svg><path d="M8 16.500H.5v-14h17V9" class="k"/><path d="M1 3h16v2H1z" fill="#c8c6c4"/><path d="M.5 5.500h17" class="k"/><path d="M3.500 7.500h3v3h-3zM3.500 12.500h3v2h-3z" class="gl"/><path d="M9 9.500h9l-3 4v4l-3-1v-3z" class="kw"/></svg></button>
<button class="plain"><svg><path d="M.5 1.500h17v15H.5z" fill="#fff"/><path d="M1 2h16v3H1z" fill="#c8c6c4"/><path d="M1 8.500h16M1 12.500h16M6.500 5v12M11.500 5v12" class="gl"/><path d="M.5 1.500h17v15H.5zM.5 5.500h17" class="k"/></svg></button>
<button class="plain"><svg><path d="M.5 1.500h17v15H.5z" fill="#83beec"/><path d="M1 2h16v3H1z" fill="#c8c6c4"/><path d="M1 6h5v6H1zM7 6h4v3H7z" fill="#fff"/><path d="M1 8.500h16M1 12.500h16M6.500 5v12M11.500 5v12" fill="none" stroke="#0063b1"/><path d="M.5 1.500h17v15H.5zM.5 5.500h17" class="k"/></svg></button>
<button class="plain ltr">R</button>
<button class="plain ltr">Py</button>
<button class="plain"><svg><path d="M3 4h9M3 9h7M3 13h4" class="gl"/><circle cx="15" cy="4" r="2.400" class="b"/><circle cx="11" cy="9" r="1.500" class="g"/><circle cx="7" cy="13" r="1.500" class="g"/><path d="M.5 0v17.500H18" class="k"/></svg></button>
<button class="plain"><svg><path d="M6 9h6M8.500 9V3H12M8.500 9v6H12" class="k"/><path d="M.5 6.500h6v4h-6zM11.500 1.500h6v3h-6zM11.500 7.500h6v3h-6zM11.500 13.500h6v3h-6z" class="b"/></svg></button>
<button class="plain"><svg><path d="M.5 2.500h17v11H8l-4 4v-4H.5z" class="bw"/></svg></button>
<button class="plain"><svg><path d="M3.500.5h8l4 4v13h-12z" class="kw"/><path d="M11.500.5v4h4" class="k"/><path d="M6 8.500h6M6 11.500h7" stroke="#1e78bd"/><circle cx="3" cy="6.500" r="2" class="b"/></svg></button>
<button class="plain"><svg><path d="M4.500 1.500h9v5q0 4-4.500 4.500-4.500-.5-4.500-4.500z" class="kw"/><path d="M4.500 2.500h-4q0 5 5 6M13.500 2.500h4q0 5-5 6M9 11v4" class="k"/><path d="M5.500 14.500h7v3h-7z" class="b"/></svg></button>
<button class="plain"><svg><path d="M2.500.5h9l4 4v13h-13z" fill="#e1dfdd" stroke="#3b3a39"/><path d="M11.500.5v4h4" class="k"/><path d="M5.500 16v-3M8.500 16v-5M12.500 16V8" stroke="#323130" stroke-width="2"/></svg></button>
<button class="plain"><svg overflow="visible"><path d="M6 .5h11.500v11M.5 9v8.500H12" class="bw"/><path d="m4 17 1-4 3-1 1-4 4-2 1-4h3v8l-4 1-1 3-3 1v2z" class="b"/><path d="M2.500-.5Q6-.5 6 3T2.500 10Q-1 6-1 3t3.500-3.500z" fill="#d8700f"/><circle cx="2.500" cy="3" r="1.200" fill="#fff"/><circle cx="15.500" cy="15.500" r="2.500" fill="#d8700f"/><circle cx="18" cy="10.500" r="1.500" fill="#d8700f"/></svg></button>
<button class="plain"><svg><path d="m6 .8-5 6q-1.200 2.200 0 4.400l5 6q1.500.6 3 0l7.500-6q1.200-2.200 0-4.400l-4.500-6q-1.500-.6-3 0zM6 17.200h6l5-6M6 .8h6M9 4.500 5 9l4 4.500L13 9zM4 3.500l5 5.500M14 14.500 9 9M4 14.500 9 9M14 3.500 9 9" fill="none" stroke="#8b3a9b" stroke-width="1.100"/></svg></button>
<button class="plain"><svg><path d="M.5 2.500H12L17.500 9 12 15.500H.5L6 9zM4.500 2.500l4 5M6 9l7.500-5M1 15.500l13.500-9.500M7 15.500 17 9" fill="none" stroke="#0f78d4" stroke-width="1.200"/></svg></button>
<button class="plain"><svg><path d="M2 8h2M8 8h2M14 8h2" stroke="#1e78bd" stroke-width="2"/></svg></button>
</div>
<div class="fields flex-fill">
<h4>Eixo X</h4>
<div class="well tall"><div class="chip"><div><span class="me-auto">Data de compra</span><svg width="12" height="12"><use href="#down"/></svg><svg width="10" height="10"><use href="#x"/></svg></div><div><span class="me-auto">Ano</span><svg width="10" height="10"><use href="#x"/></svg></div><div><span class="me-auto">Trimestre</span><svg width="10" height="10"><use href="#x"/></svg></div><div><span class="me-auto">Mês</span><svg width="10" height="10"><use href="#x"/></svg></div><div><span class="me-auto">Dia</span><svg width="10" height="10"><use href="#x"/></svg></div></div></div>
<h4>Eixo Y</h4>
<div class="well tall"><div class="chip"><div><span class="me-auto">Faturamento Total</span><svg width="12" height="12"><use href="#down"/></svg><svg width="10" height="10"><use href="#x"/></svg></div></div></div>
<h4>Legenda</h4><div class="well empty">Adicionar os campos de da...</div>
<h4>Múltiplos pequenos</h4><div class="well empty">Adicionar os campos de da...</div>
<h4>Dicas de ferramentas</h4>
</div></aside>

<aside class="pane data flex-shrink-0 overflow-hidden">
<div class="phead d-flex align-items-center justify-content-between"><h2>Dados</h2><button class="plain" type="button" aria-label="Recolher"><svg width="14" height="14"><use href="#dbl"/></svg></button></div>
<div class="search d-flex align-items-center"><svg width="14" height="14"><circle cx="9" cy="5" r="4.300" fill="none" stroke="#1f5f99"/><path d="m6 8-5.500 5.500" stroke="#323130"/></svg><input type="text" placeholder="Pesquisar" aria-label="Pesquisar"></div>
<ul class="tree list-unstyled m-0" id="tree"></ul>
</aside>
</main>
<footer class="status d-flex align-items-center justify-content-between"><span>ágina 1 de 1</span>
<div class="zoombar d-flex align-items-center"><button class="plain" type="button">-</button><input class="zoomr" type="range" min="10" max="190" value="76" aria-label="Zoom"><button class="plain" type="button">+</button><span class="pct">76%</span><svg width="17" height="12"><path d="M.5.5h16v11H.5z" fill="none" stroke="#605e5c"/><path d="M3 5V3h3M11 3h3v2M14 7v2h-3M6 9H3V7" fill="none" stroke="#8b3a9b"/></svg></div></footer>

<script>
const days=[18,20,21,22,23,25,26,27,28,29,30,31];
for(let d=1;d<30;d++)days.push(d);
const vals=[4,4,2,2,1,2,6,7,6,8,7,9,10,6,4,10,11,2,7,13,4,7,5,15,14,10,11,11,20,19,22,10,2,12,28,11,7,16,31,15,13];
cols.innerHTML=vals.map(v=>`<i style="height:${v}px"></i>`).join('');
d1.innerHTML=days.slice(0,12).map(d=>`<span>${d}</span>`).join('');
d2.innerHTML=days.slice(12).map(d=>`<span>${d}</span>`).join('');
const ic=(n,s)=>`<svg width="${s}" height="${s}"><use href="#${n}"/></svg>`;
const badge='<svg class="okb" width="12" height="12"><use href="#ok"/></svg>';
const cal='<svg width="16" height="16"><path d="M.5 2.500h15v12H.5zM.5 5.500h15M3.500 0v4M12.500 0v4" fill="none" stroke="#323130"/><path d="M3 8.500h11M3 11.500h11" stroke="#323130" stroke-dasharray="1.500 1.500"/></svg>';
let k=0;
const table=(n,open,b)=>`<li class="tb"><span class="dim">${ic(open?'down':'right',12)}</span>${ic('tbl',14)}${b?badge:''}<span>${n}</span></li>`;
const field=(n,c,i,e)=>`<li class="fld"><span class="exp dim">${e?ic('right',12):''}</span><input class="form-check-input" type="checkbox" id="f${++k}" ${c?'checked':''}><span class="ic">${i||''}</span>${e?badge:''}<label for="f${k}">${n}</label>${e?'<svg width="11" height="4"><path d="M0 2h2M5 2h2M10 2h2" stroke="#797775" stroke-width="1.500"/></svg>':''}</li>`;
tree.innerHTML=table('Clientes',1)+['Bairro','Estado civil','Gênero','ID Consumidor','Pets'].map(n=>field(n)).join('')+table('Produtos',0)+table('Vendas',1,1)+field('Data de compra',1,cal,1)+field('Faturamento',0,ic('tsum',16))+field('Faturamento Total',1,ic('calc',16))+field('ID Consumidor')+field('ID Produto')+field('Quantidade',0,ic('sum',16))+field('Transacao',0,ic('sum',16))+field('Valor',0,ic('tsum',16));
</script>
<script src="https://cdn.jsdelivr.net/npm/bootstrap@5.3.0/dist/js/bootstrap.bundle.min.js"></script>
</body>
</html>
